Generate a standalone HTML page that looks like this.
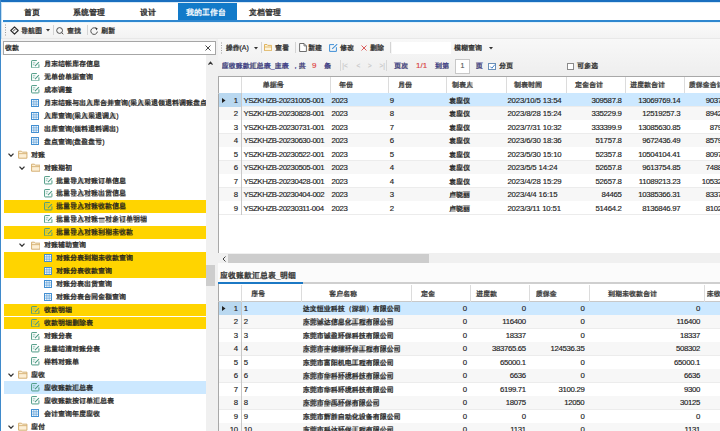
<!DOCTYPE html>
<html><head><meta charset="utf-8"><style>
html,body{margin:0;padding:0;}
body{width:720px;height:431px;overflow:hidden;position:relative;background:#f0f0f0;font-family:"Liberation Sans",sans-serif;}
body div{position:absolute;box-sizing:border-box;}
.t{white-space:nowrap;-webkit-text-stroke:0.15px currentColor;}
.c{-webkit-text-stroke:0.2px currentColor;}
i{display:inline-block;width:1em;font-style:normal;text-align:center;background:linear-gradient(rgba(0,0,0,0.3),rgba(0,0,0,0.3)) 50% 55%/80% 0.88em no-repeat;}
i.p{background:none;}
.w i{background-image:linear-gradient(rgba(255,255,255,0.3),rgba(255,255,255,0.3));}
</style></head><body>
<div style="left:0px;top:0px;width:720px;height:22px;background:#fff"></div>
<div style="left:0px;top:0px;width:720px;height:1.5px;background:#1a6fbf"></div>
<div style="left:0px;top:1.5px;width:720px;height:1px;background:#d6e9f6"></div>
<div style="left:178.3px;top:3.3px;width:58.4px;height:18px;background:#127ac9"></div>
<div class="t c" style="left:24.2px;top:6.70px;height:12px;line-height:12px;font-size:8px;color:#2a2a2a;-webkit-text-stroke:0.25px #2a2a2a"><i>首</i><i>页</i></div>
<div class="t c" style="left:73.3px;top:6.70px;height:12px;line-height:12px;font-size:8px;color:#2a2a2a;-webkit-text-stroke:0.25px #2a2a2a"><i>系</i><i>统</i><i>管</i><i>理</i></div>
<div class="t c" style="left:140px;top:6.70px;height:12px;line-height:12px;font-size:8px;color:#2a2a2a;-webkit-text-stroke:0.25px #2a2a2a"><i>设</i><i>计</i></div>
<div class="t c w" style="left:186.4px;top:6.70px;height:12px;line-height:12px;font-size:8px;color:#fff;"><i>我</i><i>的</i><i>工</i><i>作</i><i>台</i></div>
<div class="t c" style="left:248.75px;top:6.70px;height:12px;line-height:12px;font-size:8px;color:#2a2a2a;-webkit-text-stroke:0.25px #2a2a2a"><i>文</i><i>档</i><i>管</i><i>理</i></div>
<div style="left:2.5px;top:20.3px;width:718px;height:1.7px;background:#2f87cf"></div>
<div style="left:1px;top:22px;width:719px;height:16px;background:linear-gradient(#fbfbfb,#f3f3f3)"></div>
<div style="left:0px;top:37.5px;width:720px;height:1px;background:#e8e8e8"></div>
<div style="left:1.4px;top:22px;width:719px;height:1.2px;background:#e6f3fa"></div>
<svg style="position:absolute;left:4px;top:24px" width="3" height="12"><g fill="#9a9a9a"><rect x="1" y="0.5" width="1" height="1"/><rect x="1" y="3" width="1" height="1"/><rect x="1" y="5.5" width="1" height="1"/><rect x="1" y="8" width="1" height="1"/><rect x="1" y="10.5" width="1" height="1"/></g></svg>
<svg style="position:absolute;left:9.6px;top:25.5px" width="9" height="9" viewBox="0 0 9 9"><path d="M4.5 0.8 L8.2 4.5 L4.5 8.2 L0.8 4.5 Z" fill="none" stroke="#2a2a2a" stroke-width="1.15" stroke-linejoin="round"/><path d="M3.1 5.5 Q3.2 3.9 5 3.7" fill="none" stroke="#555" stroke-width="0.8"/><path d="M4.6 2.9 L5.9 3.7 L4.7 4.6 Z" fill="#555"/></svg>
<div class="t c" style="left:21px;top:24.50px;height:12px;line-height:12px;font-size:7px;color:#2a2a2a;"><i>导</i><i>航</i><i>图</i></div>
<svg style="position:absolute;left:45.5px;top:29px" width="4" height="3"><path d="M0 0 L4 0 L2 2.5 Z" fill="#333"/></svg>
<div style="left:53px;top:24.5px;width:1px;height:10.5px;background:#d4d4d4"></div>
<svg style="position:absolute;left:56px;top:26.8px" width="8.5" height="8" viewBox="0 0 8.5 8"><circle cx="3.6" cy="3.5" r="2.9" fill="none" stroke="#333" stroke-width="0.85"/><path d="M5.9 5.8 L7.3 7.2" stroke="#333" stroke-width="0.9"/></svg>
<div class="t c" style="left:67px;top:24.50px;height:12px;line-height:12px;font-size:7px;color:#2a2a2a;"><i>查</i><i>找</i></div>
<div style="left:87px;top:24.5px;width:1px;height:10.5px;background:#d4d4d4"></div>
<svg style="position:absolute;left:90.4px;top:26.5px" width="8.5" height="8" viewBox="0 0 8.5 8"><path d="M6.9 2.3 A3.3 3.3 0 1 0 7.4 4.6" fill="none" stroke="#333" stroke-width="0.85"/><path d="M5.1 0.3 L7.6 1.2 L6.6 3.4 Z" fill="#333"/></svg>
<div class="t c" style="left:101px;top:24.50px;height:12px;line-height:12px;font-size:7px;color:#2a2a2a;"><i>刷</i><i>新</i></div>
<div style="left:218px;top:38.5px;width:502px;height:37px;background:linear-gradient(#f8f8f8,#eeeeee)"></div>
<div style="left:216px;top:41px;width:2px;height:390px;background:#f0f0f0"></div>
<svg style="position:absolute;left:220px;top:42px" width="3" height="12"><g fill="#a0a0a0"><rect x="1" y="0.5" width="1" height="1"/><rect x="1" y="3" width="1" height="1"/><rect x="1" y="5.5" width="1" height="1"/><rect x="1" y="8" width="1" height="1"/><rect x="1" y="10.5" width="1" height="1"/></g></svg>
<div class="t c" style="left:225.5px;top:41.60px;height:12px;line-height:12px;font-size:7px;color:#2a2a2a;"><i>操</i><i>作</i>(A)</div>
<svg style="position:absolute;left:253.5px;top:46.5px" width="4" height="3"><path d="M0 0 L4 0 L2 2.5 Z" fill="#333"/></svg>
<div style="left:260.5px;top:42px;width:1px;height:11px;background:#d4d4d4"></div>
<svg style="position:absolute;left:263.8px;top:44.1px" width="8.2" height="7.2" viewBox="0 0 8.2 7.2"><path d="M0.5 0.5 L3 0.5 L3.8 1.4 L7.7 1.4 L7.7 6.7 L0.5 6.7 Z" fill="#fdf3da" stroke="#dcae52" stroke-width="0.9"/><path d="M0.5 3 L7.7 3" stroke="#dcae52" stroke-width="0.8"/></svg>
<div class="t c" style="left:274.8px;top:41.60px;height:12px;line-height:12px;font-size:7px;color:#2a2a2a;"><i>查</i><i>看</i></div>
<div style="left:294.5px;top:42px;width:1px;height:11px;background:#d4d4d4"></div>
<svg style="position:absolute;left:298.5px;top:43.3px" width="8" height="9" viewBox="0 0 8 9"><path d="M0.6 0.5 L5 0.5 L7.4 2.9 L7.4 8.5 L0.6 8.5 Z" fill="#fff" stroke="#555" stroke-width="0.85"/><path d="M5 0.5 L5 2.9 L7.4 2.9" fill="none" stroke="#555" stroke-width="0.75"/></svg>
<div class="t c" style="left:308px;top:41.60px;height:12px;line-height:12px;font-size:7px;color:#2a2a2a;"><i>新</i><i>建</i></div>
<svg style="position:absolute;left:328.6px;top:43.8px" width="9" height="8" viewBox="0 0 9 8"><path d="M5 0.6 L0.6 0.6 L0.6 7.4 L7.4 7.4 L7.4 3.2" fill="none" stroke="#3f8fd6" stroke-width="1"/><path d="M3.2 4.8 L8.2 0.2" stroke="#3f8fd6" stroke-width="1.1"/></svg>
<div class="t c" style="left:339.8px;top:41.60px;height:12px;line-height:12px;font-size:7px;color:#2a2a2a;"><i>修</i><i>改</i></div>
<svg style="position:absolute;left:360.6px;top:45px" width="6" height="6" viewBox="0 0 6 6"><path d="M0.5 0.5 L5.5 5.5 M5.5 0.5 L0.5 5.5" stroke="#d84a4a" stroke-width="0.9"/></svg>
<div class="t c" style="left:370px;top:41.60px;height:12px;line-height:12px;font-size:7px;color:#2a2a2a;"><i>删</i><i>除</i></div>
<div style="left:390.3px;top:42px;width:1px;height:11px;background:#d4d4d4"></div>
<div style="left:391.5px;top:41.5px;width:59.5px;height:12.5px;background:#fff"></div>
<div class="t c" style="left:454px;top:41.60px;height:12px;line-height:12px;font-size:7px;color:#2a2a2a;"><i>模</i><i>糊</i><i>查</i><i>询</i></div>
<svg style="position:absolute;left:488.5px;top:46.5px" width="4" height="3"><path d="M0 0 L4 0 L2 2.5 Z" fill="#333"/></svg>
<div class="t c" style="left:221.7px;top:60.10px;height:12px;line-height:12px;font-size:7px;color:#38388a;"><i>应</i><i>收</i><i>账</i><i>款</i><i>汇</i><i>总</i><i>表</i>_<i>主</i><i>表</i></div>
<div class="t c" style="left:291.5px;top:60.10px;height:12px;line-height:12px;font-size:7px;color:#38388a;"><i class="p">，</i><i>共</i></div>
<div class="t" style="left:312px;top:60.10px;height:12px;line-height:12px;font-size:8px;color:#e04040;">9</div>
<div class="t c" style="left:324px;top:60.10px;height:12px;line-height:12px;font-size:7px;color:#38388a;"><i>条</i></div>
<div style="left:340.3px;top:60px;width:1px;height:11px;background:#d8d8d8"></div>
<div class="t" style="left:342.3px;top:60.10px;height:12px;line-height:12px;font-size:6.3px;color:#c8c8c8;">|&lt;</div>
<div class="t" style="left:356.5px;top:60.10px;height:12px;line-height:12px;font-size:6.3px;color:#c8c8c8;">&lt;</div>
<div class="t" style="left:368px;top:60.10px;height:12px;line-height:12px;font-size:6.3px;color:#c8c8c8;">&gt;</div>
<div class="t" style="left:379.5px;top:60.10px;height:12px;line-height:12px;font-size:6.3px;color:#c8c8c8;">&gt;|</div>
<div style="left:386.3px;top:60px;width:1px;height:11px;background:#d8d8d8"></div>
<div class="t c" style="left:394px;top:60.10px;height:12px;line-height:12px;font-size:7px;color:#38388a;"><i>页</i><i>次</i></div>
<div class="t" style="left:416px;top:60.10px;height:12px;line-height:12px;font-size:8px;color:#d84040;">1/1</div>
<div class="t c" style="left:435px;top:60.10px;height:12px;line-height:12px;font-size:7px;color:#38388a;"><i>到</i><i>第</i></div>
<div style="left:455px;top:59px;width:15px;height:14.5px;background:#fff;border:1px solid #c8c8c8;box-sizing:border-box"></div>
<div class="t" style="left:460.5px;top:60.10px;height:12px;line-height:12px;font-size:7px;color:#555;">1</div>
<div class="t c" style="left:475.7px;top:60.10px;height:12px;line-height:12px;font-size:7px;color:#38388a;"><i>页</i></div>
<div style="left:488.2px;top:62.5px;width:7.5px;height:7.5px;background:#fff;border:1px solid #6a8fb8;box-sizing:border-box"></div>
<svg style="position:absolute;left:488.5px;top:62.5px" width="7" height="7" viewBox="0 0 7 7"><path d="M1.3 3.6 L2.9 5.2 L5.9 1.6" fill="none" stroke="#2a6fc0" stroke-width="0.9"/></svg>
<div class="t c" style="left:499.3px;top:60.10px;height:12px;line-height:12px;font-size:7px;color:#2a2a2a;"><i>分</i><i>页</i></div>
<div style="left:566.7px;top:62.5px;width:7.5px;height:7.5px;background:#fff;border:1px solid #8a8a8a;box-sizing:border-box"></div>
<div class="t c" style="left:577px;top:60.10px;height:12px;line-height:12px;font-size:7px;color:#2a2a2a;"><i>可</i><i>多</i><i>选</i></div>
<div style="left:0px;top:0px;width:1px;height:431px;background:#3f8acb"></div>
<div style="left:1px;top:2.5px;width:0.8px;height:428.5px;background:#c4e0f4"></div>
<div style="left:1.2px;top:38.5px;width:215px;height:392.5px;background:#f3f3f3"></div>
<div style="left:3px;top:41px;width:212.5px;height:13.7px;background:#fff;border:1px solid #a6a6a6;box-sizing:border-box"></div>
<div class="t c" style="left:5.2px;top:42.00px;height:12px;line-height:12px;font-size:7px;color:#222;"><i>收</i><i>款</i></div>
<svg style="position:absolute;left:204.5px;top:45px" width="6" height="6" viewBox="0 0 6 6"><path d="M0.5 0.5 L5.5 5.5 M5.5 0.5 L0.5 5.5" stroke="#333" stroke-width="0.9"/></svg>
<div style="left:1.2px;top:55px;width:204.8px;height:376px;background:#fff"></div>
<div style="left:206px;top:55px;width:10px;height:376px;background:#f0f0f0"></div>
<svg style="position:absolute;left:207.8px;top:60.8px" width="5" height="4.4" viewBox="0 0 5 4.4"><path d="M0.5 3.7 L2.5 1.2 L4.5 3.7" fill="none" stroke="#333" stroke-width="1.2"/></svg>
<div style="left:206px;top:265.2px;width:8.5px;height:21.3px;background:#cdcdcd"></div>
<div style="left:1.2px;top:55px;width:204.8px;height:376px;overflow:hidden">
<svg style="position:absolute;left:30.1px;top:4.575px" width="8.5" height="8.5" viewBox="0 0 9 9"><path d="M6.2 0.6 L1.2 0.6 Q0.6 0.6 0.6 1.2 L0.6 7.8 Q0.6 8.4 1.2 8.4 L7.8 8.4 Q8.4 8.4 8.4 7.8 L8.4 4.6" fill="none" stroke="#4c9a84" stroke-width="1.05"/><path d="M2 3 L4.6 3 M2 5 L3.6 5" stroke="#7ab0a0" stroke-width="0.9"/><path d="M4.2 6.4 L8.4 2.2" stroke="#4c9a84" stroke-width="1.15"/></svg>
<div class="t c" style="left:42.8px;top:2.97px;height:12px;line-height:12px;font-size:7px;color:#222;"><i>月</i><i>末</i><i>结</i><i>帐</i><i>库</i><i>存</i><i>信</i><i>息</i></div>
<svg style="position:absolute;left:30.1px;top:17.525000000000002px" width="8.5" height="8.5" viewBox="0 0 9 9"><path d="M6.2 0.6 L1.2 0.6 Q0.6 0.6 0.6 1.2 L0.6 7.8 Q0.6 8.4 1.2 8.4 L7.8 8.4 Q8.4 8.4 8.4 7.8 L8.4 4.6" fill="none" stroke="#4c9a84" stroke-width="1.05"/><path d="M2 3 L4.6 3 M2 5 L3.6 5" stroke="#7ab0a0" stroke-width="0.9"/><path d="M4.2 6.4 L8.4 2.2" stroke="#4c9a84" stroke-width="1.15"/></svg>
<div class="t c" style="left:42.8px;top:15.93px;height:12px;line-height:12px;font-size:7px;color:#222;"><i>无</i><i>单</i><i>价</i><i>单</i><i>据</i><i>查</i><i>询</i></div>
<svg style="position:absolute;left:30.1px;top:30.475000000000005px" width="8.5" height="8.5" viewBox="0 0 9 9"><path d="M6.2 0.6 L1.2 0.6 Q0.6 0.6 0.6 1.2 L0.6 7.8 Q0.6 8.4 1.2 8.4 L7.8 8.4 Q8.4 8.4 8.4 7.8 L8.4 4.6" fill="none" stroke="#4c9a84" stroke-width="1.05"/><path d="M2 3 L4.6 3 M2 5 L3.6 5" stroke="#7ab0a0" stroke-width="0.9"/><path d="M4.2 6.4 L8.4 2.2" stroke="#4c9a84" stroke-width="1.15"/></svg>
<div class="t c" style="left:42.8px;top:28.88px;height:12px;line-height:12px;font-size:7px;color:#222;"><i>成</i><i>本</i><i>调</i><i>整</i></div>
<svg style="position:absolute;left:30.3px;top:43.62499999999999px" width="8" height="8" viewBox="0 0 9 9"><rect x="0.6" y="0.6" width="7.8" height="7.8" fill="#fff" stroke="#3a8ad0" stroke-width="1.1"/><path d="M0.6 3.2 L8.4 3.2 M0.6 5.8 L8.4 5.8 M3.2 0.6 L3.2 8.4 M5.8 0.6 L5.8 8.4" stroke="#4a94d4" stroke-width="0.75"/></svg>
<div class="t c" style="left:42.8px;top:41.82px;height:12px;line-height:12px;font-size:7px;color:#222;"><i>月</i><i>末</i><i>结</i><i>账</i><i>与</i><i>出</i><i>入</i><i>库</i><i>合</i><i>并</i><i>查</i><i>询</i>(<i>采</i><i>入</i><i>采</i><i>退</i><i>领</i><i>退</i><i>料</i><i>调</i><i>账</i><i>盘</i><i>点</i></div>
<svg style="position:absolute;left:30.3px;top:56.574999999999996px" width="8" height="8" viewBox="0 0 9 9"><rect x="0.6" y="0.6" width="7.8" height="7.8" fill="#fff" stroke="#3a8ad0" stroke-width="1.1"/><path d="M0.6 3.2 L8.4 3.2 M0.6 5.8 L8.4 5.8 M3.2 0.6 L3.2 8.4 M5.8 0.6 L5.8 8.4" stroke="#4a94d4" stroke-width="0.75"/></svg>
<div class="t c" style="left:42.8px;top:54.77px;height:12px;line-height:12px;font-size:7px;color:#222;"><i>入</i><i>库</i><i>查</i><i>询</i>(<i>采</i><i>入</i><i>采</i><i>退</i><i>调</i><i>入</i>)</div>
<svg style="position:absolute;left:30.3px;top:69.525px" width="8" height="8" viewBox="0 0 9 9"><rect x="0.6" y="0.6" width="7.8" height="7.8" fill="#fff" stroke="#3a8ad0" stroke-width="1.1"/><path d="M0.6 3.2 L8.4 3.2 M0.6 5.8 L8.4 5.8 M3.2 0.6 L3.2 8.4 M5.8 0.6 L5.8 8.4" stroke="#4a94d4" stroke-width="0.75"/></svg>
<div class="t c" style="left:42.8px;top:67.72px;height:12px;line-height:12px;font-size:7px;color:#222;"><i>出</i><i>库</i><i>查</i><i>询</i>(<i>领</i><i>料</i><i>退</i><i>料</i><i>调</i><i>出</i>)</div>
<svg style="position:absolute;left:30.3px;top:82.475px" width="8" height="8" viewBox="0 0 9 9"><rect x="0.6" y="0.6" width="7.8" height="7.8" fill="#fff" stroke="#3a8ad0" stroke-width="1.1"/><path d="M0.6 3.2 L8.4 3.2 M0.6 5.8 L8.4 5.8 M3.2 0.6 L3.2 8.4 M5.8 0.6 L5.8 8.4" stroke="#4a94d4" stroke-width="0.75"/></svg>
<div class="t c" style="left:42.8px;top:80.67px;height:12px;line-height:12px;font-size:7px;color:#222;"><i>盘</i><i>点</i><i>查</i><i>询</i>(<i>盘</i><i>盈</i><i>盘</i><i>亏</i>)</div>
<svg style="position:absolute;left:6.5px;top:97.62499999999997px" width="6" height="4" viewBox="0 0 6 4"><path d="M0.5 0.6 L3 3.2 L5.5 0.6" fill="none" stroke="#333" stroke-width="1.3"/></svg>
<svg style="position:absolute;left:17.1px;top:95.02499999999998px" width="9.5" height="9" viewBox="0 0 10 9"><path d="M0.6 1 L3.6 1 L4.6 2 L9.4 2 L9.4 8.4 L0.6 8.4 Z" fill="#fcefd6" stroke="#d3ad6e" stroke-width="1"/><path d="M0.6 3.6 L9.4 3.6" stroke="#d3ad6e" stroke-width="0.9"/></svg>
<div class="t c" style="left:29.900000000000002px;top:93.62px;height:12px;line-height:12px;font-size:7px;color:#222;"><i>对</i><i>账</i></div>
<svg style="position:absolute;left:18.099999999999998px;top:110.57499999999999px" width="6" height="4" viewBox="0 0 6 4"><path d="M0.5 0.6 L3 3.2 L5.5 0.6" fill="none" stroke="#333" stroke-width="1.3"/></svg>
<svg style="position:absolute;left:29.400000000000002px;top:107.975px" width="9.5" height="9" viewBox="0 0 10 9"><path d="M0.6 1 L3.6 1 L4.6 2 L9.4 2 L9.4 8.4 L0.6 8.4 Z" fill="#fcefd6" stroke="#d3ad6e" stroke-width="1"/><path d="M0.6 3.6 L9.4 3.6" stroke="#d3ad6e" stroke-width="0.9"/></svg>
<div class="t c" style="left:42.9px;top:106.57px;height:12px;line-height:12px;font-size:7px;color:#222;"><i>对</i><i>账</i><i>期</i><i>初</i></div>
<svg style="position:absolute;left:43.099999999999994px;top:121.12500000000001px" width="8.5" height="8.5" viewBox="0 0 9 9"><path d="M6.2 0.6 L1.2 0.6 Q0.6 0.6 0.6 1.2 L0.6 7.8 Q0.6 8.4 1.2 8.4 L7.8 8.4 Q8.4 8.4 8.4 7.8 L8.4 4.6" fill="none" stroke="#4c9a84" stroke-width="1.05"/><path d="M2 3 L4.6 3 M2 5 L3.6 5" stroke="#7ab0a0" stroke-width="0.9"/><path d="M4.2 6.4 L8.4 2.2" stroke="#4c9a84" stroke-width="1.15"/></svg>
<div class="t c" style="left:54.699999999999996px;top:119.53px;height:12px;line-height:12px;font-size:7px;color:#222;"><i>批</i><i>量</i><i>导</i><i>入</i><i>对</i><i>账</i><i>订</i><i>单</i><i>信</i><i>息</i></div>
<svg style="position:absolute;left:43.099999999999994px;top:134.075px" width="8.5" height="8.5" viewBox="0 0 9 9"><path d="M6.2 0.6 L1.2 0.6 Q0.6 0.6 0.6 1.2 L0.6 7.8 Q0.6 8.4 1.2 8.4 L7.8 8.4 Q8.4 8.4 8.4 7.8 L8.4 4.6" fill="none" stroke="#4c9a84" stroke-width="1.05"/><path d="M2 3 L4.6 3 M2 5 L3.6 5" stroke="#7ab0a0" stroke-width="0.9"/><path d="M4.2 6.4 L8.4 2.2" stroke="#4c9a84" stroke-width="1.15"/></svg>
<div class="t c" style="left:54.699999999999996px;top:132.47px;height:12px;line-height:12px;font-size:7px;color:#222;"><i>批</i><i>量</i><i>导</i><i>入</i><i>对</i><i>账</i><i>出</i><i>货</i><i>信</i><i>息</i></div>
<div style="left:2.5px;top:144.95px;width:202.5px;height:12.95px;background:#ffd400"></div>
<svg style="position:absolute;left:43.099999999999994px;top:147.02499999999998px" width="8.5" height="8.5" viewBox="0 0 9 9"><path d="M6.2 0.6 L1.2 0.6 Q0.6 0.6 0.6 1.2 L0.6 7.8 Q0.6 8.4 1.2 8.4 L7.8 8.4 Q8.4 8.4 8.4 7.8 L8.4 4.6" fill="none" stroke="#4c9a84" stroke-width="1.05"/><path d="M2 3 L4.6 3 M2 5 L3.6 5" stroke="#7ab0a0" stroke-width="0.9"/><path d="M4.2 6.4 L8.4 2.2" stroke="#4c9a84" stroke-width="1.15"/></svg>
<div class="t c" style="left:54.699999999999996px;top:145.42px;height:12px;line-height:12px;font-size:7px;color:#222;"><i>批</i><i>量</i><i>导</i><i>入</i><i>对</i><i>账</i><i>收</i><i>款</i><i>信</i><i>息</i></div>
<svg style="position:absolute;left:43.099999999999994px;top:159.97499999999997px" width="8.5" height="8.5" viewBox="0 0 9 9"><path d="M6.2 0.6 L1.2 0.6 Q0.6 0.6 0.6 1.2 L0.6 7.8 Q0.6 8.4 1.2 8.4 L7.8 8.4 Q8.4 8.4 8.4 7.8 L8.4 4.6" fill="none" stroke="#4c9a84" stroke-width="1.05"/><path d="M2 3 L4.6 3 M2 5 L3.6 5" stroke="#7ab0a0" stroke-width="0.9"/><path d="M4.2 6.4 L8.4 2.2" stroke="#4c9a84" stroke-width="1.15"/></svg>
<div class="t c" style="left:54.699999999999996px;top:158.37px;height:12px;line-height:12px;font-size:7px;color:#222;"><i>批</i><i>量</i><i>导</i><i>入</i><i>对</i><i>账</i><i>一</i><i>对</i><i>多</i><i>订</i><i>单</i><i>明</i><i>细</i></div>
<div style="left:2.5px;top:170.85px;width:202.5px;height:12.95px;background:#ffd400"></div>
<svg style="position:absolute;left:43.099999999999994px;top:172.92499999999998px" width="8.5" height="8.5" viewBox="0 0 9 9"><path d="M6.2 0.6 L1.2 0.6 Q0.6 0.6 0.6 1.2 L0.6 7.8 Q0.6 8.4 1.2 8.4 L7.8 8.4 Q8.4 8.4 8.4 7.8 L8.4 4.6" fill="none" stroke="#4c9a84" stroke-width="1.05"/><path d="M2 3 L4.6 3 M2 5 L3.6 5" stroke="#7ab0a0" stroke-width="0.9"/><path d="M4.2 6.4 L8.4 2.2" stroke="#4c9a84" stroke-width="1.15"/></svg>
<div class="t c" style="left:54.699999999999996px;top:171.32px;height:12px;line-height:12px;font-size:7px;color:#222;"><i>批</i><i>量</i><i>导</i><i>入</i><i>对</i><i>账</i><i>到</i><i>期</i><i>未</i><i>收</i><i>款</i></div>
<svg style="position:absolute;left:18.099999999999998px;top:188.27499999999998px" width="6" height="4" viewBox="0 0 6 4"><path d="M0.5 0.6 L3 3.2 L5.5 0.6" fill="none" stroke="#333" stroke-width="1.3"/></svg>
<svg style="position:absolute;left:29.400000000000002px;top:185.67499999999998px" width="9.5" height="9" viewBox="0 0 10 9"><path d="M0.6 1 L3.6 1 L4.6 2 L9.4 2 L9.4 8.4 L0.6 8.4 Z" fill="#fcefd6" stroke="#d3ad6e" stroke-width="1"/><path d="M0.6 3.6 L9.4 3.6" stroke="#d3ad6e" stroke-width="0.9"/></svg>
<div class="t c" style="left:42.9px;top:184.27px;height:12px;line-height:12px;font-size:7px;color:#222;"><i>对</i><i>账</i><i>辅</i><i>助</i><i>查</i><i>询</i></div>
<div style="left:2.5px;top:196.75px;width:202.5px;height:12.95px;background:#ffd400"></div>
<svg style="position:absolute;left:43.3px;top:199.025px" width="8" height="8" viewBox="0 0 9 9"><rect x="0.6" y="0.6" width="7.8" height="7.8" fill="#fff" stroke="#3a8ad0" stroke-width="1.1"/><path d="M0.6 3.2 L8.4 3.2 M0.6 5.8 L8.4 5.8 M3.2 0.6 L3.2 8.4 M5.8 0.6 L5.8 8.4" stroke="#4a94d4" stroke-width="0.75"/></svg>
<div class="t c" style="left:54.699999999999996px;top:197.22px;height:12px;line-height:12px;font-size:7px;color:#222;"><i>对</i><i>账</i><i>分</i><i>表</i><i>到</i><i>期</i><i>未</i><i>收</i><i>款</i><i>查</i><i>询</i></div>
<div style="left:2.5px;top:209.7px;width:202.5px;height:12.95px;background:#ffd400"></div>
<svg style="position:absolute;left:43.3px;top:211.975px" width="8" height="8" viewBox="0 0 9 9"><rect x="0.6" y="0.6" width="7.8" height="7.8" fill="#fff" stroke="#3a8ad0" stroke-width="1.1"/><path d="M0.6 3.2 L8.4 3.2 M0.6 5.8 L8.4 5.8 M3.2 0.6 L3.2 8.4 M5.8 0.6 L5.8 8.4" stroke="#4a94d4" stroke-width="0.75"/></svg>
<div class="t c" style="left:54.699999999999996px;top:210.17px;height:12px;line-height:12px;font-size:7px;color:#222;"><i>对</i><i>账</i><i>分</i><i>表</i><i>收</i><i>款</i><i>查</i><i>询</i></div>
<svg style="position:absolute;left:43.3px;top:224.92499999999998px" width="8" height="8" viewBox="0 0 9 9"><rect x="0.6" y="0.6" width="7.8" height="7.8" fill="#fff" stroke="#3a8ad0" stroke-width="1.1"/><path d="M0.6 3.2 L8.4 3.2 M0.6 5.8 L8.4 5.8 M3.2 0.6 L3.2 8.4 M5.8 0.6 L5.8 8.4" stroke="#4a94d4" stroke-width="0.75"/></svg>
<div class="t c" style="left:54.699999999999996px;top:223.12px;height:12px;line-height:12px;font-size:7px;color:#222;"><i>对</i><i>账</i><i>分</i><i>表</i><i>出</i><i>货</i><i>查</i><i>询</i></div>
<svg style="position:absolute;left:43.3px;top:237.87500000000003px" width="8" height="8" viewBox="0 0 9 9"><rect x="0.6" y="0.6" width="7.8" height="7.8" fill="#fff" stroke="#3a8ad0" stroke-width="1.1"/><path d="M0.6 3.2 L8.4 3.2 M0.6 5.8 L8.4 5.8 M3.2 0.6 L3.2 8.4 M5.8 0.6 L5.8 8.4" stroke="#4a94d4" stroke-width="0.75"/></svg>
<div class="t c" style="left:54.699999999999996px;top:236.08px;height:12px;line-height:12px;font-size:7px;color:#222;"><i>对</i><i>账</i><i>分</i><i>表</i><i>合</i><i>同</i><i>金</i><i>额</i><i>查</i><i>询</i></div>
<div style="left:2.5px;top:248.54999999999995px;width:202.5px;height:12.95px;background:#ffd400"></div>
<svg style="position:absolute;left:30.1px;top:250.62499999999994px" width="8.5" height="8.5" viewBox="0 0 9 9"><path d="M6.2 0.6 L1.2 0.6 Q0.6 0.6 0.6 1.2 L0.6 7.8 Q0.6 8.4 1.2 8.4 L7.8 8.4 Q8.4 8.4 8.4 7.8 L8.4 4.6" fill="none" stroke="#4c9a84" stroke-width="1.05"/><path d="M2 3 L4.6 3 M2 5 L3.6 5" stroke="#7ab0a0" stroke-width="0.9"/><path d="M4.2 6.4 L8.4 2.2" stroke="#4c9a84" stroke-width="1.15"/></svg>
<div class="t c" style="left:42.8px;top:249.02px;height:12px;line-height:12px;font-size:7px;color:#222;"><i>收</i><i>款</i><i>明</i><i>细</i></div>
<div style="left:2.5px;top:261.5px;width:202.5px;height:12.95px;background:#ffd400"></div>
<svg style="position:absolute;left:30.1px;top:263.575px" width="8.5" height="8.5" viewBox="0 0 9 9"><path d="M6.2 0.6 L1.2 0.6 Q0.6 0.6 0.6 1.2 L0.6 7.8 Q0.6 8.4 1.2 8.4 L7.8 8.4 Q8.4 8.4 8.4 7.8 L8.4 4.6" fill="none" stroke="#4c9a84" stroke-width="1.05"/><path d="M2 3 L4.6 3 M2 5 L3.6 5" stroke="#7ab0a0" stroke-width="0.9"/><path d="M4.2 6.4 L8.4 2.2" stroke="#4c9a84" stroke-width="1.15"/></svg>
<div class="t c" style="left:42.8px;top:261.98px;height:12px;line-height:12px;font-size:7px;color:#222;"><i>收</i><i>款</i><i>明</i><i>细</i><i>删</i><i>除</i><i>表</i></div>
<svg style="position:absolute;left:30.1px;top:276.525px" width="8.5" height="8.5" viewBox="0 0 9 9"><path d="M6.2 0.6 L1.2 0.6 Q0.6 0.6 0.6 1.2 L0.6 7.8 Q0.6 8.4 1.2 8.4 L7.8 8.4 Q8.4 8.4 8.4 7.8 L8.4 4.6" fill="none" stroke="#4c9a84" stroke-width="1.05"/><path d="M2 3 L4.6 3 M2 5 L3.6 5" stroke="#7ab0a0" stroke-width="0.9"/><path d="M4.2 6.4 L8.4 2.2" stroke="#4c9a84" stroke-width="1.15"/></svg>
<div class="t c" style="left:42.8px;top:274.93px;height:12px;line-height:12px;font-size:7px;color:#222;"><i>对</i><i>账</i><i>分</i><i>表</i></div>
<svg style="position:absolute;left:30.1px;top:289.47499999999997px" width="8.5" height="8.5" viewBox="0 0 9 9"><path d="M6.2 0.6 L1.2 0.6 Q0.6 0.6 0.6 1.2 L0.6 7.8 Q0.6 8.4 1.2 8.4 L7.8 8.4 Q8.4 8.4 8.4 7.8 L8.4 4.6" fill="none" stroke="#4c9a84" stroke-width="1.05"/><path d="M2 3 L4.6 3 M2 5 L3.6 5" stroke="#7ab0a0" stroke-width="0.9"/><path d="M4.2 6.4 L8.4 2.2" stroke="#4c9a84" stroke-width="1.15"/></svg>
<div class="t c" style="left:42.8px;top:287.88px;height:12px;line-height:12px;font-size:7px;color:#222;"><i>批</i><i>量</i><i>结</i><i>清</i><i>对</i><i>账</i><i>分</i><i>表</i></div>
<svg style="position:absolute;left:30.1px;top:302.42499999999995px" width="8.5" height="8.5" viewBox="0 0 9 9"><path d="M6.2 0.6 L1.2 0.6 Q0.6 0.6 0.6 1.2 L0.6 7.8 Q0.6 8.4 1.2 8.4 L7.8 8.4 Q8.4 8.4 8.4 7.8 L8.4 4.6" fill="none" stroke="#4c9a84" stroke-width="1.05"/><path d="M2 3 L4.6 3 M2 5 L3.6 5" stroke="#7ab0a0" stroke-width="0.9"/><path d="M4.2 6.4 L8.4 2.2" stroke="#4c9a84" stroke-width="1.15"/></svg>
<div class="t c" style="left:42.8px;top:300.82px;height:12px;line-height:12px;font-size:7px;color:#222;"><i>样</i><i>料</i><i>对</i><i>账</i><i>单</i></div>
<svg style="position:absolute;left:6.5px;top:317.775px" width="6" height="4" viewBox="0 0 6 4"><path d="M0.5 0.6 L3 3.2 L5.5 0.6" fill="none" stroke="#333" stroke-width="1.3"/></svg>
<svg style="position:absolute;left:17.1px;top:315.17499999999995px" width="9.5" height="9" viewBox="0 0 10 9"><path d="M0.6 1 L3.6 1 L4.6 2 L9.4 2 L9.4 8.4 L0.6 8.4 Z" fill="#fcefd6" stroke="#d3ad6e" stroke-width="1"/><path d="M0.6 3.6 L9.4 3.6" stroke="#d3ad6e" stroke-width="0.9"/></svg>
<div class="t c" style="left:29.900000000000002px;top:313.77px;height:12px;line-height:12px;font-size:7px;color:#222;"><i>应</i><i>收</i></div>
<div style="left:2.5px;top:326.25px;width:202.5px;height:12.95px;background:#cce8ff"></div>
<svg style="position:absolute;left:30.1px;top:328.325px" width="8.5" height="8.5" viewBox="0 0 9 9"><path d="M6.2 0.6 L1.2 0.6 Q0.6 0.6 0.6 1.2 L0.6 7.8 Q0.6 8.4 1.2 8.4 L7.8 8.4 Q8.4 8.4 8.4 7.8 L8.4 4.6" fill="none" stroke="#4c9a84" stroke-width="1.05"/><path d="M2 3 L4.6 3 M2 5 L3.6 5" stroke="#7ab0a0" stroke-width="0.9"/><path d="M4.2 6.4 L8.4 2.2" stroke="#4c9a84" stroke-width="1.15"/></svg>
<div class="t c" style="left:42.8px;top:326.73px;height:12px;line-height:12px;font-size:7px;color:#222;"><i>应</i><i>收</i><i>账</i><i>款</i><i>汇</i><i>总</i><i>表</i></div>
<svg style="position:absolute;left:30.1px;top:341.275px" width="8.5" height="8.5" viewBox="0 0 9 9"><path d="M6.2 0.6 L1.2 0.6 Q0.6 0.6 0.6 1.2 L0.6 7.8 Q0.6 8.4 1.2 8.4 L7.8 8.4 Q8.4 8.4 8.4 7.8 L8.4 4.6" fill="none" stroke="#4c9a84" stroke-width="1.05"/><path d="M2 3 L4.6 3 M2 5 L3.6 5" stroke="#7ab0a0" stroke-width="0.9"/><path d="M4.2 6.4 L8.4 2.2" stroke="#4c9a84" stroke-width="1.15"/></svg>
<div class="t c" style="left:42.8px;top:339.68px;height:12px;line-height:12px;font-size:7px;color:#222;"><i>应</i><i>收</i><i>账</i><i>款</i><i>按</i><i>订</i><i>单</i><i>汇</i><i>总</i><i>表</i></div>
<svg style="position:absolute;left:30.3px;top:354.42499999999995px" width="8" height="8" viewBox="0 0 9 9"><rect x="0.6" y="0.6" width="7.8" height="7.8" fill="#fff" stroke="#3a8ad0" stroke-width="1.1"/><path d="M0.6 3.2 L8.4 3.2 M0.6 5.8 L8.4 5.8 M3.2 0.6 L3.2 8.4 M5.8 0.6 L5.8 8.4" stroke="#4a94d4" stroke-width="0.75"/></svg>
<div class="t c" style="left:42.8px;top:352.62px;height:12px;line-height:12px;font-size:7px;color:#222;"><i>会</i><i>计</i><i>查</i><i>询</i><i>年</i><i>度</i><i>应</i><i>收</i></div>
<svg style="position:absolute;left:6.5px;top:369.575px" width="6" height="4" viewBox="0 0 6 4"><path d="M0.5 0.6 L3 3.2 L5.5 0.6" fill="none" stroke="#333" stroke-width="1.3"/></svg>
<svg style="position:absolute;left:17.1px;top:366.97499999999997px" width="9.5" height="9" viewBox="0 0 10 9"><path d="M0.6 1 L3.6 1 L4.6 2 L9.4 2 L9.4 8.4 L0.6 8.4 Z" fill="#fcefd6" stroke="#d3ad6e" stroke-width="1"/><path d="M0.6 3.6 L9.4 3.6" stroke="#d3ad6e" stroke-width="0.9"/></svg>
<div class="t c" style="left:29.900000000000002px;top:365.57px;height:12px;line-height:12px;font-size:7px;color:#222;"><i>应</i><i>付</i></div>
</div>
<div style="left:218.3px;top:75.6px;width:502px;height:177.7px;background:#fff"></div>
<div style="left:218.3px;top:75.6px;width:502px;height:1px;background:#a8a8a8"></div>
<div style="left:218.3px;top:75.6px;width:1px;height:177.7px;background:#a8a8a8"></div>
<div style="left:218.3px;top:92.60000000000001px;width:502px;height:1px;background:#c8c8c8"></div>
<div style="left:241.1px;top:76.6px;width:1px;height:16.60000000000001px;background:#dcdcdc"></div>
<div style="left:329.5px;top:76.6px;width:1px;height:16.60000000000001px;background:#dcdcdc"></div>
<div style="left:388px;top:76.6px;width:1px;height:16.60000000000001px;background:#dcdcdc"></div>
<div style="left:446.4px;top:76.6px;width:1px;height:16.60000000000001px;background:#dcdcdc"></div>
<div style="left:505.5px;top:76.6px;width:1px;height:16.60000000000001px;background:#dcdcdc"></div>
<div style="left:565.7px;top:76.6px;width:1px;height:16.60000000000001px;background:#dcdcdc"></div>
<div style="left:625.4px;top:76.6px;width:1px;height:16.60000000000001px;background:#dcdcdc"></div>
<div style="left:683.5px;top:76.6px;width:1px;height:16.60000000000001px;background:#dcdcdc"></div>
<div class="t c" style="left:262.5px;top:79.20px;height:12px;line-height:12px;font-size:7px;color:#333;"><i>单</i><i>据</i><i>号</i></div>
<div class="t c" style="left:339px;top:79.20px;height:12px;line-height:12px;font-size:7px;color:#333;"><i>年</i><i>份</i></div>
<div class="t c" style="left:397.8px;top:79.20px;height:12px;line-height:12px;font-size:7px;color:#333;"><i>月</i><i>份</i></div>
<div class="t c" style="left:452px;top:79.20px;height:12px;line-height:12px;font-size:7px;color:#333;"><i>制</i><i>表</i><i>人</i></div>
<div class="t c" style="left:513.8px;top:79.20px;height:12px;line-height:12px;font-size:7px;color:#333;"><i>制</i><i>表</i><i>时</i><i>间</i></div>
<div class="t c" style="left:575px;top:79.20px;height:12px;line-height:12px;font-size:7px;color:#333;"><i>定</i><i>金</i><i>合</i><i>计</i></div>
<div class="t c" style="left:630px;top:79.20px;height:12px;line-height:12px;font-size:7px;color:#333;"><i>进</i><i>度</i><i>款</i><i>合</i><i>计</i></div>
<div class="t c" style="left:688.7px;top:79.20px;height:12px;line-height:12px;font-size:7px;color:#333;"><i>质</i><i>保</i><i>金</i><i>合</i><i>计</i></div>
<div style="left:219.3px;top:93.2px;width:500.7px;height:160.10000000000002px;overflow:hidden">
<div style="left:0px;top:0.0px;width:502px;height:13.5px;background:#cce8ff"></div>
<div style="left:0px;top:13.0px;width:502px;height:0.6px;background:#ececec"></div>
<div style="left:0px;top:0.0px;width:21.799999999999983px;height:13.5px;background:#b9d8f0"></div>
<svg style="position:absolute;left:3.0px;top:4.95px" width="4" height="5"><path d="M0 0 L3.5 2.5 L0 5 Z" fill="#222"/></svg>
<div class="t" style="left:-101.60000000000002px;width:120px;text-align:right;top:1.45px;height:12px;line-height:12px;font-size:7.8px;color:#222;letter-spacing:-0.33px">1</div>
<div class="t" style="left:24.099999999999994px;top:1.45px;height:12px;line-height:12px;font-size:7.8px;color:#222;letter-spacing:-0.4px">YSZKHZB-20231005-001</div>
<div class="t" style="left:112.19999999999999px;top:1.45px;height:12px;line-height:12px;font-size:7.8px;color:#222;letter-spacing:-0.33px">2023</div>
<div class="t" style="left:170.5px;top:1.45px;height:12px;line-height:12px;font-size:7.8px;color:#222;">9</div>
<div class="t c" style="left:229.7px;top:1.45px;height:12px;line-height:12px;font-size:7px;color:#222;"><i>袁</i><i>应</i><i>仪</i></div>
<div class="t" style="left:288.09999999999997px;top:1.45px;height:12px;line-height:12px;font-size:7.8px;color:#222;letter-spacing:-0.15px">2023/10/5 13:54</div>
<div class="t" style="left:282.2px;width:120px;text-align:right;top:1.45px;height:12px;line-height:12px;font-size:7.8px;color:#222;letter-spacing:-0.33px">309587.8</div>
<div class="t" style="left:340.90000000000003px;width:120px;text-align:right;top:1.45px;height:12px;line-height:12px;font-size:7.8px;color:#222;letter-spacing:-0.33px">13069769.14</div>
<div class="t" style="left:400.4000000000001px;width:120px;text-align:right;top:1.45px;height:12px;line-height:12px;font-size:7.8px;color:#222;letter-spacing:-0.33px">903747.56</div>
<div style="left:0px;top:13.5px;width:502px;height:13.5px;background:#f7f7f7"></div>
<div style="left:0px;top:26.5px;width:502px;height:0.6px;background:#ececec"></div>
<div class="t" style="left:-101.60000000000002px;width:120px;text-align:right;top:14.95px;height:12px;line-height:12px;font-size:7.8px;color:#222;letter-spacing:-0.33px">2</div>
<div class="t" style="left:24.099999999999994px;top:14.95px;height:12px;line-height:12px;font-size:7.8px;color:#222;letter-spacing:-0.4px">YSZKHZB-20230828-001</div>
<div class="t" style="left:112.19999999999999px;top:14.95px;height:12px;line-height:12px;font-size:7.8px;color:#222;letter-spacing:-0.33px">2023</div>
<div class="t" style="left:170.5px;top:14.95px;height:12px;line-height:12px;font-size:7.8px;color:#222;">8</div>
<div class="t c" style="left:229.7px;top:14.95px;height:12px;line-height:12px;font-size:7px;color:#222;"><i>袁</i><i>应</i><i>仪</i></div>
<div class="t" style="left:288.09999999999997px;top:14.95px;height:12px;line-height:12px;font-size:7.8px;color:#222;letter-spacing:-0.15px">2023/8/28 15:24</div>
<div class="t" style="left:282.2px;width:120px;text-align:right;top:14.95px;height:12px;line-height:12px;font-size:7.8px;color:#222;letter-spacing:-0.33px">335229.9</div>
<div class="t" style="left:340.90000000000003px;width:120px;text-align:right;top:14.95px;height:12px;line-height:12px;font-size:7.8px;color:#222;letter-spacing:-0.33px">12519257.3</div>
<div class="t" style="left:400.4000000000001px;width:120px;text-align:right;top:14.95px;height:12px;line-height:12px;font-size:7.8px;color:#222;letter-spacing:-0.33px">894218.37</div>
<div style="left:0px;top:27.0px;width:502px;height:13.5px;background:#fff"></div>
<div style="left:0px;top:40.0px;width:502px;height:0.6px;background:#ececec"></div>
<div class="t" style="left:-101.60000000000002px;width:120px;text-align:right;top:28.45px;height:12px;line-height:12px;font-size:7.8px;color:#222;letter-spacing:-0.33px">3</div>
<div class="t" style="left:24.099999999999994px;top:28.45px;height:12px;line-height:12px;font-size:7.8px;color:#222;letter-spacing:-0.4px">YSZKHZB-20230731-001</div>
<div class="t" style="left:112.19999999999999px;top:28.45px;height:12px;line-height:12px;font-size:7.8px;color:#222;letter-spacing:-0.33px">2023</div>
<div class="t" style="left:170.5px;top:28.45px;height:12px;line-height:12px;font-size:7.8px;color:#222;">7</div>
<div class="t c" style="left:229.7px;top:28.45px;height:12px;line-height:12px;font-size:7px;color:#222;"><i>袁</i><i>应</i><i>仪</i></div>
<div class="t" style="left:288.09999999999997px;top:28.45px;height:12px;line-height:12px;font-size:7.8px;color:#222;letter-spacing:-0.15px">2023/7/31 10:32</div>
<div class="t" style="left:282.2px;width:120px;text-align:right;top:28.45px;height:12px;line-height:12px;font-size:7.8px;color:#222;letter-spacing:-0.33px">333399.9</div>
<div class="t" style="left:340.90000000000003px;width:120px;text-align:right;top:28.45px;height:12px;line-height:12px;font-size:7.8px;color:#222;letter-spacing:-0.33px">13085630.85</div>
<div class="t" style="left:400.4000000000001px;width:120px;text-align:right;top:28.45px;height:12px;line-height:12px;font-size:7.8px;color:#222;letter-spacing:-0.33px">87935.62</div>
<div style="left:0px;top:40.5px;width:502px;height:13.5px;background:#f7f7f7"></div>
<div style="left:0px;top:53.5px;width:502px;height:0.6px;background:#ececec"></div>
<div class="t" style="left:-101.60000000000002px;width:120px;text-align:right;top:41.95px;height:12px;line-height:12px;font-size:7.8px;color:#222;letter-spacing:-0.33px">4</div>
<div class="t" style="left:24.099999999999994px;top:41.95px;height:12px;line-height:12px;font-size:7.8px;color:#222;letter-spacing:-0.4px">YSZKHZB-20230630-001</div>
<div class="t" style="left:112.19999999999999px;top:41.95px;height:12px;line-height:12px;font-size:7.8px;color:#222;letter-spacing:-0.33px">2023</div>
<div class="t" style="left:170.5px;top:41.95px;height:12px;line-height:12px;font-size:7.8px;color:#222;">6</div>
<div class="t c" style="left:229.7px;top:41.95px;height:12px;line-height:12px;font-size:7px;color:#222;"><i>袁</i><i>应</i><i>仪</i></div>
<div class="t" style="left:288.09999999999997px;top:41.95px;height:12px;line-height:12px;font-size:7.8px;color:#222;letter-spacing:-0.15px">2023/6/30 18:36</div>
<div class="t" style="left:282.2px;width:120px;text-align:right;top:41.95px;height:12px;line-height:12px;font-size:7.8px;color:#222;letter-spacing:-0.33px">51757.8</div>
<div class="t" style="left:340.90000000000003px;width:120px;text-align:right;top:41.95px;height:12px;line-height:12px;font-size:7.8px;color:#222;letter-spacing:-0.33px">9672436.49</div>
<div class="t" style="left:400.4000000000001px;width:120px;text-align:right;top:41.95px;height:12px;line-height:12px;font-size:7.8px;color:#222;letter-spacing:-0.33px">857962.18</div>
<div style="left:0px;top:54.0px;width:502px;height:13.5px;background:#fff"></div>
<div style="left:0px;top:67.0px;width:502px;height:0.6px;background:#ececec"></div>
<div class="t" style="left:-101.60000000000002px;width:120px;text-align:right;top:55.45px;height:12px;line-height:12px;font-size:7.8px;color:#222;letter-spacing:-0.33px">5</div>
<div class="t" style="left:24.099999999999994px;top:55.45px;height:12px;line-height:12px;font-size:7.8px;color:#222;letter-spacing:-0.4px">YSZKHZB-20230522-001</div>
<div class="t" style="left:112.19999999999999px;top:55.45px;height:12px;line-height:12px;font-size:7.8px;color:#222;letter-spacing:-0.33px">2023</div>
<div class="t" style="left:170.5px;top:55.45px;height:12px;line-height:12px;font-size:7.8px;color:#222;">5</div>
<div class="t c" style="left:229.7px;top:55.45px;height:12px;line-height:12px;font-size:7px;color:#222;"><i>袁</i><i>应</i><i>仪</i></div>
<div class="t" style="left:288.09999999999997px;top:55.45px;height:12px;line-height:12px;font-size:7.8px;color:#222;letter-spacing:-0.15px">2023/5/30 15:10</div>
<div class="t" style="left:282.2px;width:120px;text-align:right;top:55.45px;height:12px;line-height:12px;font-size:7.8px;color:#222;letter-spacing:-0.33px">52357.8</div>
<div class="t" style="left:340.90000000000003px;width:120px;text-align:right;top:55.45px;height:12px;line-height:12px;font-size:7.8px;color:#222;letter-spacing:-0.33px">10504104.41</div>
<div class="t" style="left:400.4000000000001px;width:120px;text-align:right;top:55.45px;height:12px;line-height:12px;font-size:7.8px;color:#222;letter-spacing:-0.33px">809735.48</div>
<div style="left:0px;top:67.5px;width:502px;height:13.5px;background:#f7f7f7"></div>
<div style="left:0px;top:80.5px;width:502px;height:0.6px;background:#ececec"></div>
<div class="t" style="left:-101.60000000000002px;width:120px;text-align:right;top:68.95px;height:12px;line-height:12px;font-size:7.8px;color:#222;letter-spacing:-0.33px">6</div>
<div class="t" style="left:24.099999999999994px;top:68.95px;height:12px;line-height:12px;font-size:7.8px;color:#222;letter-spacing:-0.4px">YSZKHZB-20230505-001</div>
<div class="t" style="left:112.19999999999999px;top:68.95px;height:12px;line-height:12px;font-size:7.8px;color:#222;letter-spacing:-0.33px">2023</div>
<div class="t" style="left:170.5px;top:68.95px;height:12px;line-height:12px;font-size:7.8px;color:#222;">4</div>
<div class="t c" style="left:229.7px;top:68.95px;height:12px;line-height:12px;font-size:7px;color:#222;"><i>袁</i><i>应</i><i>仪</i></div>
<div class="t" style="left:288.09999999999997px;top:68.95px;height:12px;line-height:12px;font-size:7.8px;color:#222;letter-spacing:-0.15px">2023/5/5 14:24</div>
<div class="t" style="left:282.2px;width:120px;text-align:right;top:68.95px;height:12px;line-height:12px;font-size:7.8px;color:#222;letter-spacing:-0.33px">52657.8</div>
<div class="t" style="left:340.90000000000003px;width:120px;text-align:right;top:68.95px;height:12px;line-height:12px;font-size:7.8px;color:#222;letter-spacing:-0.33px">9613754.85</div>
<div class="t" style="left:400.4000000000001px;width:120px;text-align:right;top:68.95px;height:12px;line-height:12px;font-size:7.8px;color:#222;letter-spacing:-0.33px">748826.35</div>
<div style="left:0px;top:81.0px;width:502px;height:13.5px;background:#fff"></div>
<div style="left:0px;top:94.0px;width:502px;height:0.6px;background:#ececec"></div>
<div class="t" style="left:-101.60000000000002px;width:120px;text-align:right;top:82.45px;height:12px;line-height:12px;font-size:7.8px;color:#222;letter-spacing:-0.33px">7</div>
<div class="t" style="left:24.099999999999994px;top:82.45px;height:12px;line-height:12px;font-size:7.8px;color:#222;letter-spacing:-0.4px">YSZKHZB-20230428-001</div>
<div class="t" style="left:112.19999999999999px;top:82.45px;height:12px;line-height:12px;font-size:7.8px;color:#222;letter-spacing:-0.33px">2023</div>
<div class="t" style="left:170.5px;top:82.45px;height:12px;line-height:12px;font-size:7.8px;color:#222;">4</div>
<div class="t c" style="left:229.7px;top:82.45px;height:12px;line-height:12px;font-size:7px;color:#222;"><i>袁</i><i>应</i><i>仪</i></div>
<div class="t" style="left:288.09999999999997px;top:82.45px;height:12px;line-height:12px;font-size:7.8px;color:#222;letter-spacing:-0.15px">2023/4/28 15:29</div>
<div class="t" style="left:282.2px;width:120px;text-align:right;top:82.45px;height:12px;line-height:12px;font-size:7.8px;color:#222;letter-spacing:-0.33px">52657.8</div>
<div class="t" style="left:340.90000000000003px;width:120px;text-align:right;top:82.45px;height:12px;line-height:12px;font-size:7.8px;color:#222;letter-spacing:-0.33px">11089213.23</div>
<div class="t" style="left:400.4000000000001px;width:120px;text-align:right;top:82.45px;height:12px;line-height:12px;font-size:7.8px;color:#222;letter-spacing:-0.33px">1053216.44</div>
<div style="left:0px;top:94.5px;width:502px;height:13.5px;background:#f7f7f7"></div>
<div style="left:0px;top:107.5px;width:502px;height:0.6px;background:#ececec"></div>
<div class="t" style="left:-101.60000000000002px;width:120px;text-align:right;top:95.95px;height:12px;line-height:12px;font-size:7.8px;color:#222;letter-spacing:-0.33px">8</div>
<div class="t" style="left:24.099999999999994px;top:95.95px;height:12px;line-height:12px;font-size:7.8px;color:#222;letter-spacing:-0.4px">YSZKHZB-20230404-002</div>
<div class="t" style="left:112.19999999999999px;top:95.95px;height:12px;line-height:12px;font-size:7.8px;color:#222;letter-spacing:-0.33px">2023</div>
<div class="t" style="left:170.5px;top:95.95px;height:12px;line-height:12px;font-size:7.8px;color:#222;">3</div>
<div class="t c" style="left:229.7px;top:95.95px;height:12px;line-height:12px;font-size:7px;color:#222;"><i>卢</i><i>晓</i><i>丽</i></div>
<div class="t" style="left:288.09999999999997px;top:95.95px;height:12px;line-height:12px;font-size:7.8px;color:#222;letter-spacing:-0.15px">2023/4/4 16:15</div>
<div class="t" style="left:282.2px;width:120px;text-align:right;top:95.95px;height:12px;line-height:12px;font-size:7.8px;color:#222;letter-spacing:-0.33px">84465</div>
<div class="t" style="left:340.90000000000003px;width:120px;text-align:right;top:95.95px;height:12px;line-height:12px;font-size:7.8px;color:#222;letter-spacing:-0.33px">10385366.31</div>
<div class="t" style="left:400.4000000000001px;width:120px;text-align:right;top:95.95px;height:12px;line-height:12px;font-size:7.8px;color:#222;letter-spacing:-0.33px">833742.15</div>
<div style="left:0px;top:108.0px;width:502px;height:13.5px;background:#fff"></div>
<div style="left:0px;top:121.0px;width:502px;height:0.6px;background:#ececec"></div>
<div class="t" style="left:-101.60000000000002px;width:120px;text-align:right;top:109.45px;height:12px;line-height:12px;font-size:7.8px;color:#222;letter-spacing:-0.33px">9</div>
<div class="t" style="left:24.099999999999994px;top:109.45px;height:12px;line-height:12px;font-size:7.8px;color:#222;letter-spacing:-0.4px">YSZKHZB-20230311-004</div>
<div class="t" style="left:112.19999999999999px;top:109.45px;height:12px;line-height:12px;font-size:7.8px;color:#222;letter-spacing:-0.33px">2023</div>
<div class="t" style="left:170.5px;top:109.45px;height:12px;line-height:12px;font-size:7.8px;color:#222;">2</div>
<div class="t c" style="left:229.7px;top:109.45px;height:12px;line-height:12px;font-size:7px;color:#222;"><i>卢</i><i>晓</i><i>丽</i></div>
<div class="t" style="left:288.09999999999997px;top:109.45px;height:12px;line-height:12px;font-size:7.8px;color:#222;letter-spacing:-0.15px">2023/3/11 10:51</div>
<div class="t" style="left:282.2px;width:120px;text-align:right;top:109.45px;height:12px;line-height:12px;font-size:7.8px;color:#222;letter-spacing:-0.33px">51464.2</div>
<div class="t" style="left:340.90000000000003px;width:120px;text-align:right;top:109.45px;height:12px;line-height:12px;font-size:7.8px;color:#222;letter-spacing:-0.33px">8136846.97</div>
<div class="t" style="left:400.4000000000001px;width:120px;text-align:right;top:109.45px;height:12px;line-height:12px;font-size:7.8px;color:#222;letter-spacing:-0.33px">810265.84</div>
<div style="left:21.799999999999983px;top:0px;width:1px;height:121.5px;background:#c8c8c8"></div>
</div>
<div style="left:218.3px;top:253.3px;width:502px;height:9.7px;background:#f0f0f0"></div>
<svg style="position:absolute;left:221.5px;top:255.5px" width="4" height="6" viewBox="0 0 4 6"><path d="M3.5 0.5 L1 3 L3.5 5.5" fill="none" stroke="#444" stroke-width="1"/></svg>
<div style="left:228px;top:254px;width:201.2px;height:8.8px;background:#cdcdcd"></div>
<div style="left:218.3px;top:263px;width:502px;height:20px;background:#fbfbfb"></div>
<div class="t c" style="left:220px;top:269.50px;height:12px;line-height:12px;font-size:8px;color:#2a2a2a;-webkit-text-stroke:0.2px #2a2a2a"><i>应</i><i>收</i><i>账</i><i>款</i><i>汇</i><i>总</i><i>表</i>_<i>明</i><i>细</i></div>
<div style="left:302.5px;top:282px;width:417.5px;height:2px;background:#cfcfcf"></div>
<div style="left:218px;top:282px;width:84.5px;height:2px;background:#1b78c4"></div>
<div style="left:218.3px;top:284px;width:502px;height:147px;background:#fff"></div>
<div style="left:218.3px;top:284px;width:1px;height:147px;background:#a8a8a8"></div>
<div style="left:218.3px;top:300.9px;width:502px;height:1px;background:#c8c8c8"></div>
<div style="left:241.3px;top:284.5px;width:1px;height:17.0px;background:#dcdcdc"></div>
<div style="left:300.6px;top:284.5px;width:1px;height:17.0px;background:#dcdcdc"></div>
<div style="left:411.2px;top:284.5px;width:1px;height:17.0px;background:#dcdcdc"></div>
<div style="left:470.2px;top:284.5px;width:1px;height:17.0px;background:#dcdcdc"></div>
<div style="left:528.9px;top:284.5px;width:1px;height:17.0px;background:#dcdcdc"></div>
<div style="left:588.9px;top:284.5px;width:1px;height:17.0px;background:#dcdcdc"></div>
<div style="left:704.4px;top:284.5px;width:1px;height:17.0px;background:#dcdcdc"></div>
<div class="t c" style="left:250.8px;top:287.55px;height:12px;line-height:12px;font-size:7px;color:#333;"><i>序</i><i>号</i></div>
<div class="t c" style="left:328.9px;top:287.55px;height:12px;line-height:12px;font-size:7px;color:#333;"><i>客</i><i>户</i><i>名</i><i>称</i></div>
<div class="t c" style="left:421px;top:287.55px;height:12px;line-height:12px;font-size:7px;color:#333;"><i>定</i><i>金</i></div>
<div class="t c" style="left:476.4px;top:287.55px;height:12px;line-height:12px;font-size:7px;color:#333;"><i>进</i><i>度</i><i>款</i></div>
<div class="t c" style="left:535.6px;top:287.55px;height:12px;line-height:12px;font-size:7px;color:#333;"><i>质</i><i>保</i><i>金</i></div>
<div class="t c" style="left:608px;top:287.55px;height:12px;line-height:12px;font-size:7px;color:#333;"><i>到</i><i>期</i><i>未</i><i>收</i><i>款</i><i>合</i><i>计</i></div>
<div class="t c" style="left:706.7px;top:287.55px;height:12px;line-height:12px;font-size:7px;color:#333;"><i>未</i><i>收</i><i>款</i></div>
<div style="left:219.3px;top:301.5px;width:500.7px;height:129.5px;overflow:hidden">
<div style="left:0px;top:0.0px;width:502px;height:13.5px;background:#cce8ff"></div>
<div style="left:0px;top:13.0px;width:502px;height:0.6px;background:#ececec"></div>
<div style="left:0px;top:0.0px;width:22.0px;height:13.5px;background:#b9d8f0"></div>
<svg style="position:absolute;left:3.0px;top:4.95px" width="4" height="5"><path d="M0 0 L3.5 2.5 L0 5 Z" fill="#222"/></svg>
<div class="t" style="left:-101.60000000000002px;width:120px;text-align:right;top:1.45px;height:12px;line-height:12px;font-size:7.8px;color:#222;letter-spacing:-0.33px">1</div>
<div class="t" style="left:24.5px;top:1.45px;height:12px;line-height:12px;font-size:7.8px;color:#222;letter-spacing:-0.33px">1</div>
<div class="t c" style="left:83.30000000000001px;top:1.45px;height:12px;line-height:12px;font-size:7px;color:#222;"><i>达</i><i>文</i><i>恒</i><i>业</i><i>科</i><i>技</i><i class="p">（</i><i>深</i><i>圳</i><i class="p">）</i><i>有</i><i>限</i><i>公</i><i>司</i></div>
<div class="t" style="left:127.39999999999998px;width:120px;text-align:right;top:1.45px;height:12px;line-height:12px;font-size:7.8px;color:#222;letter-spacing:-0.33px">0</div>
<div class="t" style="left:186.49999999999994px;width:120px;text-align:right;top:1.45px;height:12px;line-height:12px;font-size:7.8px;color:#222;letter-spacing:-0.33px">0</div>
<div class="t" style="left:245.09999999999997px;width:120px;text-align:right;top:1.45px;height:12px;line-height:12px;font-size:7.8px;color:#222;letter-spacing:-0.33px">0</div>
<div class="t" style="left:360.7px;width:120px;text-align:right;top:1.45px;height:12px;line-height:12px;font-size:7.8px;color:#222;letter-spacing:-0.33px">0</div>
<div style="left:0px;top:13.5px;width:502px;height:13.5px;background:#f7f7f7"></div>
<div style="left:0px;top:26.5px;width:502px;height:0.6px;background:#ececec"></div>
<div class="t" style="left:-101.60000000000002px;width:120px;text-align:right;top:14.95px;height:12px;line-height:12px;font-size:7.8px;color:#222;letter-spacing:-0.33px">2</div>
<div class="t" style="left:24.5px;top:14.95px;height:12px;line-height:12px;font-size:7.8px;color:#222;letter-spacing:-0.33px">2</div>
<div class="t c" style="left:83.30000000000001px;top:14.95px;height:12px;line-height:12px;font-size:7px;color:#222;"><i>东</i><i>莞</i><i>诚</i><i>达</i><i>信</i><i>息</i><i>化</i><i>工</i><i>程</i><i>有</i><i>限</i><i>公</i><i>司</i></div>
<div class="t" style="left:127.39999999999998px;width:120px;text-align:right;top:14.95px;height:12px;line-height:12px;font-size:7.8px;color:#222;letter-spacing:-0.33px">0</div>
<div class="t" style="left:186.49999999999994px;width:120px;text-align:right;top:14.95px;height:12px;line-height:12px;font-size:7.8px;color:#222;letter-spacing:-0.33px">116400</div>
<div class="t" style="left:245.09999999999997px;width:120px;text-align:right;top:14.95px;height:12px;line-height:12px;font-size:7.8px;color:#222;letter-spacing:-0.33px">0</div>
<div class="t" style="left:360.7px;width:120px;text-align:right;top:14.95px;height:12px;line-height:12px;font-size:7.8px;color:#222;letter-spacing:-0.33px">116400</div>
<div style="left:0px;top:27.0px;width:502px;height:13.5px;background:#fff"></div>
<div style="left:0px;top:40.0px;width:502px;height:0.6px;background:#ececec"></div>
<div class="t" style="left:-101.60000000000002px;width:120px;text-align:right;top:28.45px;height:12px;line-height:12px;font-size:7.8px;color:#222;letter-spacing:-0.33px">3</div>
<div class="t" style="left:24.5px;top:28.45px;height:12px;line-height:12px;font-size:7.8px;color:#222;letter-spacing:-0.33px">3</div>
<div class="t c" style="left:83.30000000000001px;top:28.45px;height:12px;line-height:12px;font-size:7px;color:#222;"><i>东</i><i>莞</i><i>市</i><i>诚</i><i>盈</i><i>环</i><i>保</i><i>科</i><i>技</i><i>有</i><i>限</i><i>公</i><i>司</i></div>
<div class="t" style="left:127.39999999999998px;width:120px;text-align:right;top:28.45px;height:12px;line-height:12px;font-size:7.8px;color:#222;letter-spacing:-0.33px">0</div>
<div class="t" style="left:186.49999999999994px;width:120px;text-align:right;top:28.45px;height:12px;line-height:12px;font-size:7.8px;color:#222;letter-spacing:-0.33px">18337</div>
<div class="t" style="left:245.09999999999997px;width:120px;text-align:right;top:28.45px;height:12px;line-height:12px;font-size:7.8px;color:#222;letter-spacing:-0.33px">0</div>
<div class="t" style="left:360.7px;width:120px;text-align:right;top:28.45px;height:12px;line-height:12px;font-size:7.8px;color:#222;letter-spacing:-0.33px">18337</div>
<div style="left:0px;top:40.5px;width:502px;height:13.5px;background:#f7f7f7"></div>
<div style="left:0px;top:53.5px;width:502px;height:0.6px;background:#ececec"></div>
<div class="t" style="left:-101.60000000000002px;width:120px;text-align:right;top:41.95px;height:12px;line-height:12px;font-size:7.8px;color:#222;letter-spacing:-0.33px">4</div>
<div class="t" style="left:24.5px;top:41.95px;height:12px;line-height:12px;font-size:7.8px;color:#222;letter-spacing:-0.33px">4</div>
<div class="t c" style="left:83.30000000000001px;top:41.95px;height:12px;line-height:12px;font-size:7px;color:#222;"><i>东</i><i>莞</i><i>市</i><i>丰</i><i>德</i><i>瑞</i><i>环</i><i>保</i><i>工</i><i>程</i><i>有</i><i>限</i><i>公</i><i>司</i></div>
<div class="t" style="left:127.39999999999998px;width:120px;text-align:right;top:41.95px;height:12px;line-height:12px;font-size:7.8px;color:#222;letter-spacing:-0.33px">0</div>
<div class="t" style="left:186.49999999999994px;width:120px;text-align:right;top:41.95px;height:12px;line-height:12px;font-size:7.8px;color:#222;letter-spacing:-0.33px">383765.65</div>
<div class="t" style="left:245.09999999999997px;width:120px;text-align:right;top:41.95px;height:12px;line-height:12px;font-size:7.8px;color:#222;letter-spacing:-0.33px">124536.35</div>
<div class="t" style="left:360.7px;width:120px;text-align:right;top:41.95px;height:12px;line-height:12px;font-size:7.8px;color:#222;letter-spacing:-0.33px">508302</div>
<div style="left:0px;top:54.0px;width:502px;height:13.5px;background:#fff"></div>
<div style="left:0px;top:67.0px;width:502px;height:0.6px;background:#ececec"></div>
<div class="t" style="left:-101.60000000000002px;width:120px;text-align:right;top:55.45px;height:12px;line-height:12px;font-size:7.8px;color:#222;letter-spacing:-0.33px">5</div>
<div class="t" style="left:24.5px;top:55.45px;height:12px;line-height:12px;font-size:7.8px;color:#222;letter-spacing:-0.33px">5</div>
<div class="t c" style="left:83.30000000000001px;top:55.45px;height:12px;line-height:12px;font-size:7px;color:#222;"><i>东</i><i>莞</i><i>市</i><i>富</i><i>阳</i><i>机</i><i>电</i><i>工</i><i>程</i><i>有</i><i>限</i><i>公</i><i>司</i></div>
<div class="t" style="left:127.39999999999998px;width:120px;text-align:right;top:55.45px;height:12px;line-height:12px;font-size:7.8px;color:#222;letter-spacing:-0.33px">0</div>
<div class="t" style="left:186.49999999999994px;width:120px;text-align:right;top:55.45px;height:12px;line-height:12px;font-size:7.8px;color:#222;letter-spacing:-0.33px">65000.1</div>
<div class="t" style="left:245.09999999999997px;width:120px;text-align:right;top:55.45px;height:12px;line-height:12px;font-size:7.8px;color:#222;letter-spacing:-0.33px">0</div>
<div class="t" style="left:360.7px;width:120px;text-align:right;top:55.45px;height:12px;line-height:12px;font-size:7.8px;color:#222;letter-spacing:-0.33px">65000.1</div>
<div style="left:0px;top:67.5px;width:502px;height:13.5px;background:#f7f7f7"></div>
<div style="left:0px;top:80.5px;width:502px;height:0.6px;background:#ececec"></div>
<div class="t" style="left:-101.60000000000002px;width:120px;text-align:right;top:68.95px;height:12px;line-height:12px;font-size:7.8px;color:#222;letter-spacing:-0.33px">6</div>
<div class="t" style="left:24.5px;top:68.95px;height:12px;line-height:12px;font-size:7.8px;color:#222;letter-spacing:-0.33px">6</div>
<div class="t c" style="left:83.30000000000001px;top:68.95px;height:12px;line-height:12px;font-size:7px;color:#222;"><i>东</i><i>莞</i><i>市</i><i>华</i><i>科</i><i>环</i><i>境</i><i>科</i><i>技</i><i>有</i><i>限</i><i>公</i><i>司</i></div>
<div class="t" style="left:127.39999999999998px;width:120px;text-align:right;top:68.95px;height:12px;line-height:12px;font-size:7.8px;color:#222;letter-spacing:-0.33px">0</div>
<div class="t" style="left:186.49999999999994px;width:120px;text-align:right;top:68.95px;height:12px;line-height:12px;font-size:7.8px;color:#222;letter-spacing:-0.33px">6636</div>
<div class="t" style="left:245.09999999999997px;width:120px;text-align:right;top:68.95px;height:12px;line-height:12px;font-size:7.8px;color:#222;letter-spacing:-0.33px">0</div>
<div class="t" style="left:360.7px;width:120px;text-align:right;top:68.95px;height:12px;line-height:12px;font-size:7.8px;color:#222;letter-spacing:-0.33px">6636</div>
<div style="left:0px;top:81.0px;width:502px;height:13.5px;background:#fff"></div>
<div style="left:0px;top:94.0px;width:502px;height:0.6px;background:#ececec"></div>
<div class="t" style="left:-101.60000000000002px;width:120px;text-align:right;top:82.45px;height:12px;line-height:12px;font-size:7.8px;color:#222;letter-spacing:-0.33px">7</div>
<div class="t" style="left:24.5px;top:82.45px;height:12px;line-height:12px;font-size:7.8px;color:#222;letter-spacing:-0.33px">7</div>
<div class="t c" style="left:83.30000000000001px;top:82.45px;height:12px;line-height:12px;font-size:7px;color:#222;"><i>东</i><i>莞</i><i>市</i><i>华</i><i>科</i><i>环</i><i>境</i><i>科</i><i>技</i><i>有</i><i>限</i><i>公</i><i>司</i></div>
<div class="t" style="left:127.39999999999998px;width:120px;text-align:right;top:82.45px;height:12px;line-height:12px;font-size:7.8px;color:#222;letter-spacing:-0.33px">0</div>
<div class="t" style="left:186.49999999999994px;width:120px;text-align:right;top:82.45px;height:12px;line-height:12px;font-size:7.8px;color:#222;letter-spacing:-0.33px">6199.71</div>
<div class="t" style="left:245.09999999999997px;width:120px;text-align:right;top:82.45px;height:12px;line-height:12px;font-size:7.8px;color:#222;letter-spacing:-0.33px">3100.29</div>
<div class="t" style="left:360.7px;width:120px;text-align:right;top:82.45px;height:12px;line-height:12px;font-size:7.8px;color:#222;letter-spacing:-0.33px">9300</div>
<div style="left:0px;top:94.5px;width:502px;height:13.5px;background:#f7f7f7"></div>
<div style="left:0px;top:107.5px;width:502px;height:0.6px;background:#ececec"></div>
<div class="t" style="left:-101.60000000000002px;width:120px;text-align:right;top:95.95px;height:12px;line-height:12px;font-size:7.8px;color:#222;letter-spacing:-0.33px">8</div>
<div class="t" style="left:24.5px;top:95.95px;height:12px;line-height:12px;font-size:7.8px;color:#222;letter-spacing:-0.33px">8</div>
<div class="t c" style="left:83.30000000000001px;top:95.95px;height:12px;line-height:12px;font-size:7px;color:#222;"><i>东</i><i>莞</i><i>市</i><i>华</i><i>禹</i><i>环</i><i>保</i><i>有</i><i>限</i><i>公</i><i>司</i></div>
<div class="t" style="left:127.39999999999998px;width:120px;text-align:right;top:95.95px;height:12px;line-height:12px;font-size:7.8px;color:#222;letter-spacing:-0.33px">0</div>
<div class="t" style="left:186.49999999999994px;width:120px;text-align:right;top:95.95px;height:12px;line-height:12px;font-size:7.8px;color:#222;letter-spacing:-0.33px">18075</div>
<div class="t" style="left:245.09999999999997px;width:120px;text-align:right;top:95.95px;height:12px;line-height:12px;font-size:7.8px;color:#222;letter-spacing:-0.33px">12050</div>
<div class="t" style="left:360.7px;width:120px;text-align:right;top:95.95px;height:12px;line-height:12px;font-size:7.8px;color:#222;letter-spacing:-0.33px">30125</div>
<div style="left:0px;top:108.0px;width:502px;height:13.5px;background:#fff"></div>
<div style="left:0px;top:121.0px;width:502px;height:0.6px;background:#ececec"></div>
<div class="t" style="left:-101.60000000000002px;width:120px;text-align:right;top:109.45px;height:12px;line-height:12px;font-size:7.8px;color:#222;letter-spacing:-0.33px">9</div>
<div class="t" style="left:24.5px;top:109.45px;height:12px;line-height:12px;font-size:7.8px;color:#222;letter-spacing:-0.33px">9</div>
<div class="t c" style="left:83.30000000000001px;top:109.45px;height:12px;line-height:12px;font-size:7px;color:#222;"><i>东</i><i>莞</i><i>市</i><i>辉</i><i>胜</i><i>自</i><i>动</i><i>化</i><i>设</i><i>备</i><i>有</i><i>限</i><i>公</i><i>司</i></div>
<div class="t" style="left:127.39999999999998px;width:120px;text-align:right;top:109.45px;height:12px;line-height:12px;font-size:7.8px;color:#222;letter-spacing:-0.33px">0</div>
<div class="t" style="left:186.49999999999994px;width:120px;text-align:right;top:109.45px;height:12px;line-height:12px;font-size:7.8px;color:#222;letter-spacing:-0.33px">0</div>
<div class="t" style="left:245.09999999999997px;width:120px;text-align:right;top:109.45px;height:12px;line-height:12px;font-size:7.8px;color:#222;letter-spacing:-0.33px">0</div>
<div class="t" style="left:360.7px;width:120px;text-align:right;top:109.45px;height:12px;line-height:12px;font-size:7.8px;color:#222;letter-spacing:-0.33px">0</div>
<div style="left:0px;top:121.5px;width:502px;height:13.5px;background:#f7f7f7"></div>
<div style="left:0px;top:134.5px;width:502px;height:0.6px;background:#ececec"></div>
<div class="t" style="left:-101.60000000000002px;width:120px;text-align:right;top:122.95px;height:12px;line-height:12px;font-size:7.8px;color:#222;letter-spacing:-0.33px">10</div>
<div class="t" style="left:24.5px;top:122.95px;height:12px;line-height:12px;font-size:7.8px;color:#222;letter-spacing:-0.33px">10</div>
<div class="t c" style="left:83.30000000000001px;top:122.95px;height:12px;line-height:12px;font-size:7px;color:#222;"><i>东</i><i>莞</i><i>市</i><i>科</i><i>达</i><i>环</i><i>保</i><i>工</i><i>程</i><i>有</i><i>限</i><i>公</i><i>司</i></div>
<div class="t" style="left:127.39999999999998px;width:120px;text-align:right;top:122.95px;height:12px;line-height:12px;font-size:7.8px;color:#222;letter-spacing:-0.33px">0</div>
<div class="t" style="left:186.49999999999994px;width:120px;text-align:right;top:122.95px;height:12px;line-height:12px;font-size:7.8px;color:#222;letter-spacing:-0.33px">1131</div>
<div class="t" style="left:245.09999999999997px;width:120px;text-align:right;top:122.95px;height:12px;line-height:12px;font-size:7.8px;color:#222;letter-spacing:-0.33px">0</div>
<div class="t" style="left:360.7px;width:120px;text-align:right;top:122.95px;height:12px;line-height:12px;font-size:7.8px;color:#222;letter-spacing:-0.33px">1131</div>
<div style="left:22.0px;top:0px;width:1px;height:135.0px;background:#c8c8c8"></div>
</div>
</body></html>
